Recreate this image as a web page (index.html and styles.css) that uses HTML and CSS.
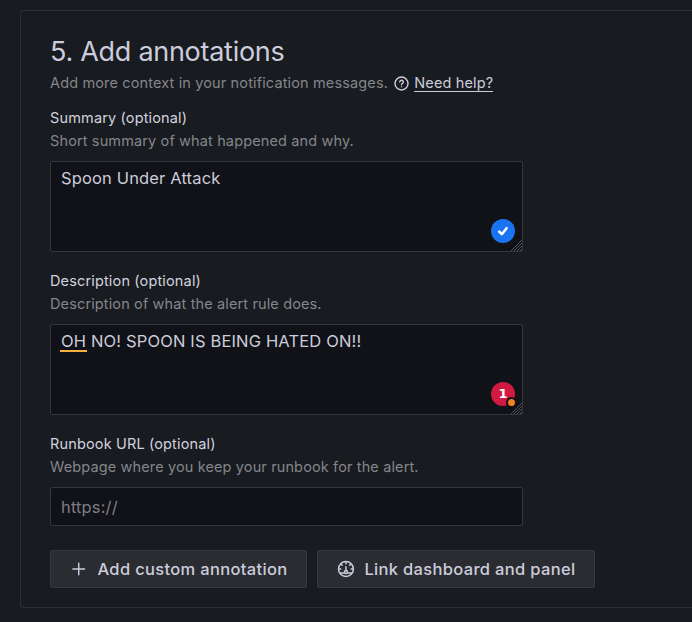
FILE: index.html
```html
<!DOCTYPE html>
<html lang="en">
<head>
<meta charset="utf-8">
<title>Add annotations</title>
<link rel="stylesheet" href="styles.css">
</head>
<body>
<section class="panel">
  <h3 class="title">5. Add annotations</h3>
  <div class="intro">
    <span>Add more context in your notification messages.</span>
    <svg class="help-icon" viewBox="0 0 24 24" width="17" height="17"><circle cx="12" cy="12" r="9.2"/><path d="M9.6 9.8a2.5 2.5 0 1 1 3.5 2.3c-.7.3-1.1.7-1.1 1.5M12 16.4v.2"/></svg>
    <a class="help">Need help?</a>
  </div>
  <div class="field">
    <div class="label">Summary (optional)</div>
    <div class="hint">Short summary of what happened and why.</div>
    <div class="box area"><span>Spoon Under Attack</span>
      <svg class="badge" viewBox="0 0 24 24"><circle cx="12" cy="12" r="12" fill="#1a73f0"/><path class="tick" d="M8.2 12.6l2.6 2.6 4.8-6"/></svg>
      <svg class="grip" viewBox="0 0 12 12"><path d="M1 12L12 1M4 12l8-8M7 12l5-5M10 12l2-2"/></svg>
    </div>
  </div>
  <div class="field">
    <div class="label">Description (optional)</div>
    <div class="hint">Description of what the alert rule does.</div>
    <div class="box area"><span><span class="flag">OH</span> NO! SPOON IS BEING HATED ON!!</span>
      <div class="badge count">1<i class="dot"></i></div>
      <svg class="grip" viewBox="0 0 12 12"><path d="M1 12L12 1M4 12l8-8M7 12l5-5M10 12l2-2"/></svg>
    </div>
  </div>
  <div class="field">
    <div class="label">Runbook URL (optional)</div>
    <div class="hint">Webpage where you keep your runbook for the alert.</div>
    <div class="box line">https://</div>
  </div>
  <div class="actions">
    <div class="btn add"><svg viewBox="0 0 24 24" width="18" height="18"><path d="M12 4v16M4 12h16"/></svg><span>Add custom annotation</span></div>
    <div class="btn link"><svg viewBox="0 0 24 24" width="18" height="18"><circle cx="12" cy="12" r="10"/><path d="M12 3v2M3 12h2M19 12h2M5.7 5.7l1.2 1.2M18.3 5.7l-1.2 1.2M4.5 17.5h5M14.5 17.5h5M12 14V9"/><circle cx="12" cy="16" r="2"/></svg><span>Link dashboard and panel</span></div>
  </div>
</section>
</body>
</html>
```
FILE: styles.css
```css
* { box-sizing: border-box; }
body { margin: 0; padding: 10px 0 14px 20px; height: 622px; background: #181b1f; color: #ccccdc; font-family: Inter, sans-serif; overflow: hidden; }
.panel { width: 700px; height: 598px; border: 1px solid #2d3035; border-radius: 3px; padding: 25px 29px; }
.title { margin: 0; font-size: 27px; line-height: 32px; font-weight: 400; letter-spacing: -.28px; }
.intro { display: flex; align-items: center; height: 22px; margin-top: 3px; font-size: 14.5px; letter-spacing: .14px; color: #85868c; }
.help-icon { margin: 2px 5px 0 5px; }
svg { fill: none; stroke: #ccccdc; stroke-width: 2; stroke-linecap: round; stroke-linejoin: round; }
.help { margin: 2px 0 0 -.8px; color: #ccccdc; border-bottom: 1px solid #ccccdc; line-height: 17px; }
.field { margin-top: 13px; font-size: 14.5px; letter-spacing: .13px; }
.field + .field { margin-top: 17px; }
.label { height: 23px; line-height: 23px; font-weight: 400; letter-spacing: .15px; color: #d2d2df; }
.hint { height: 23px; line-height: 23px; color: #85868c; }
.box { position: relative; width: 473px; margin-top: 9px; padding: 4px 10px; background: #111217; border: 1px solid #34363b; border-radius: 2px; font-size: 16.5px; line-height: 24px; letter-spacing: .15px; }
.area { height: 91px; }
.line { height: 39px; line-height: 30px; color: #7d7e84; }
.badge { position: absolute; right: 7px; bottom: 8px; width: 24px; height: 24px; stroke: none; }
.tick { stroke: #fff; stroke-width: 2.6; }
.count { border-radius: 50%; background: #d01a42; color: #fff; text-align: center; font: 700 13px/24px "DejaVu Sans", sans-serif; }
.dot { position: absolute; right: -2px; bottom: -2px; width: 11px; height: 11px; border-radius: 50%; background: #f5821f; border: 2px solid #111217; }
.grip { position: absolute; right: 0; bottom: 0; width: 12px; height: 12px; stroke-width: 1; stroke: #55565b; }
.flag { position: relative; }
.flag::after { content: ""; position: absolute; left: -1px; right: -1px; bottom: -1px; height: 2.5px; background: #f5b041; }
.actions { display: flex; gap: 10px; margin-top: 24px; }
.btn { display: flex; align-items: center; height: 38px; padding: 0 18.5px; background: #2a2c31; border: 1px solid #36383d; border-radius: 2px; font-size: 16.5px; font-weight: 500; letter-spacing: .33px; white-space: nowrap; gap: 10.5px; }
.add { width: 257px; }
.link { width: 278px; padding-left: 18.5px; gap: 10px; }
```
